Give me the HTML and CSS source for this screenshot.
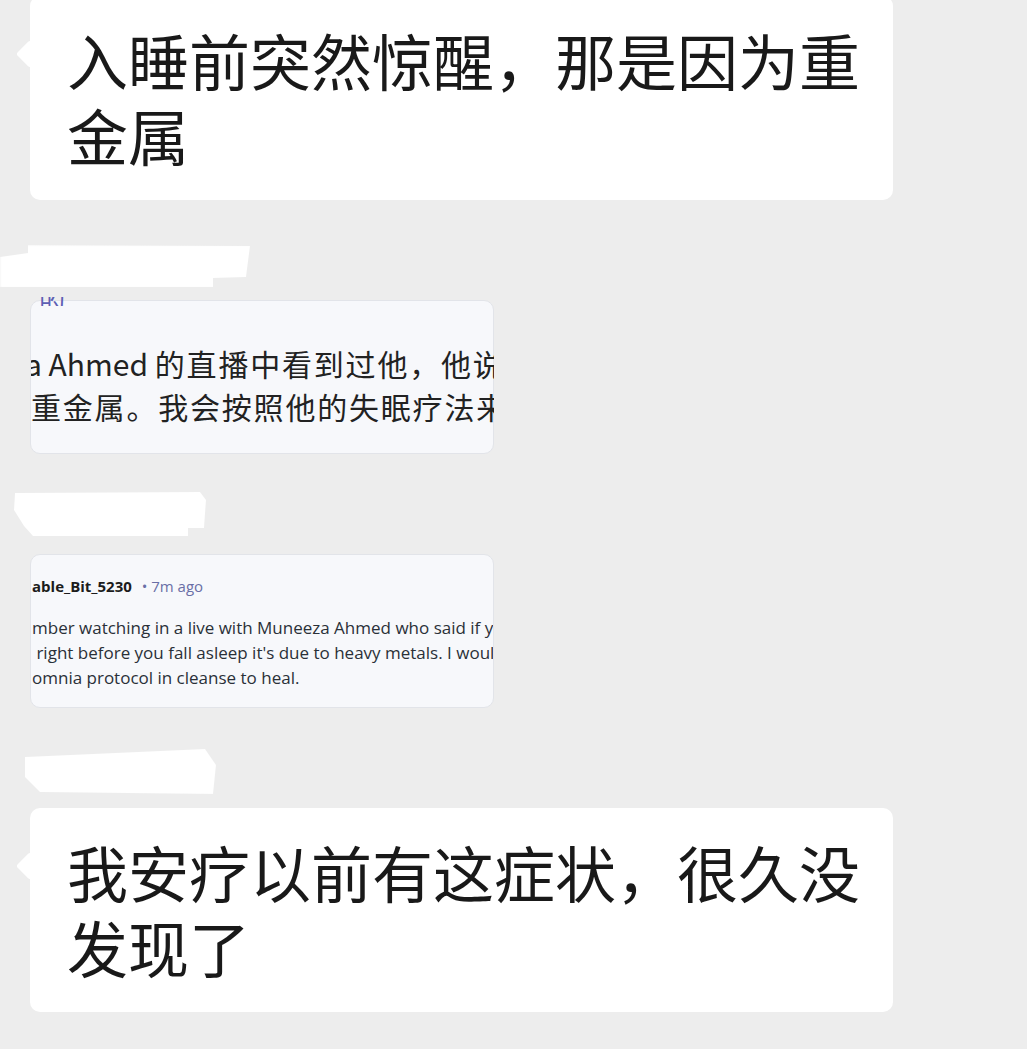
FILE: index.html
```html
<!DOCTYPE html>
<html lang="zh-CN">
<head>
    <meta charset="UTF-8">
    <meta name="viewport" content="width=device-width, initial-scale=1.0">
    <title>聊天记录</title>
    <link rel="stylesheet" href="styles.css">
</head>
<body>

<div class="chat">

    <div class="bubble bubble-first">入睡前突然惊醒，那是因为重金属</div>

    <div class="sender">
        <div class="redact redact-1"></div>
    </div>
    <div class="shot shot-zh">
        <span class="shot-peek">的</span>
        <p class="zh-line zh-cut">a Ahmed <span class="zh-wide">的直播中看到过他，他说如果</span></p>
        <p class="zh-line"><span class="zh-wide">重金属。我会按照他的失眠疗法来排毒</span></p>
    </div>

    <div class="sender">
        <div class="redact redact-2"></div>
    </div>
    <div class="shot shot-en">
        <div class="post-head">
            <span class="post-user">able_Bit_5230</span>
            <span class="post-time">&bull; 7m ago</span>
        </div>
        <p class="en-line">mber watching in a live with Muneeza Ahmed who said if you wake up</p>
        <p class="en-line">&nbsp;right before you fall asleep it's due to heavy metals. I would follow her ins</p>
        <p class="en-line">omnia protocol in cleanse to heal.</p>
    </div>

    <div class="sender">
        <div class="redact redact-3"></div>
    </div>
    <div class="bubble">我安疗以前有这症状，很久没发现了</div>

</div>

</body>
</html>
```

FILE: styles.css
```css
body {
    margin: 0;
    background-color: #ededed;
    font-family: "Noto Sans CJK SC", "Noto Sans", sans-serif;
    overflow: hidden;
}
.chat {
    padding-left: 30px;
    width: 863px;
}

/* text bubbles */
.bubble {
    position: relative;
    background: #ffffff;
    color: #191919;
    border-radius: 10px;
    padding: 26px 14px 28px 37px;
    font-size: 61px;
    line-height: 75px;
}
.bubble::before {
    content: "";
    position: absolute;
    left: -10px;
    top: 48px;
    width: 20px;
    height: 20px;
    background: #ffffff;
    border-radius: 3px;
    transform: rotate(45deg);
}
.bubble-first {
    margin-top: -4px;
}

/* redacted sender names */
.sender {
    display: flow-root;
    height: 100px;
    margin-left: -30px;
}
.redact {
    background: #ffffff;
    filter: blur(1.2px);
}
.redact-1 {
    width: 252px;
    height: 43px;
    margin-top: 45px;
    clip-path: polygon(28px 0, 250px 1px, 246px 32px, 213px 33px, 213px 42px, 0 42px, 0 12px, 28px 8px);
}
.redact-2 {
    width: 208px;
    height: 48px;
    margin-top: 36px;
    clip-path: polygon(15px 3px, 200px 2px, 206px 10px, 204px 38px, 188px 38px, 188px 46px, 33px 46px, 24px 36px, 14px 20px);
}
.redact-3 {
    width: 220px;
    height: 48px;
    margin-top: 39px;
    clip-path: polygon(25px 10px, 205px 2px, 216px 18px, 213px 47px, 40px 45px, 25px 30px);
}

/* pasted screenshots */
.shot {
    position: relative;
    width: 464px;
    background: #f7f8fb;
    border: 1px solid #e2e4e9;
    border-radius: 10px;
    overflow: hidden;
    white-space: nowrap;
    box-sizing: border-box;
    height: 154px;
}
.shot p {
    margin: 0;
}
.shot-zh {
    padding-top: 41px;
    overflow: visible;
}
.shot-zh .zh-line {
    width: 463px;
    overflow: hidden;
}
.shot-peek {
    position: absolute;
    left: 8px;
    top: -4px;
    height: 9px;
    overflow: hidden;
    font-size: 26px;
    line-height: 9px;
    color: #5d5fb4;
    display: block;
}
.zh-line {
    font-size: 30px;
    line-height: 43px;
    color: #222222;
    margin-left: -1px;
}
.zh-wide {
    letter-spacing: 1.8px;
}
.zh-cut {
    text-indent: -6px;
}

.shot-en {
    padding-top: 21px;
    font-family: "Open Sans", "Noto Sans", sans-serif;
}
.post-head {
    font-size: 15px;
    line-height: 20px;
    padding-left: 1px;
    margin-bottom: 19px;
}
.post-user {
    font-weight: 700;
    color: #1c1c1c;
}
.post-time {
    color: #6a6fa6;
    margin-left: 6px;
}
.en-line {
    font-size: 17px;
    line-height: 25px;
    color: #2a3038;
    padding-left: 1px;
}
```
